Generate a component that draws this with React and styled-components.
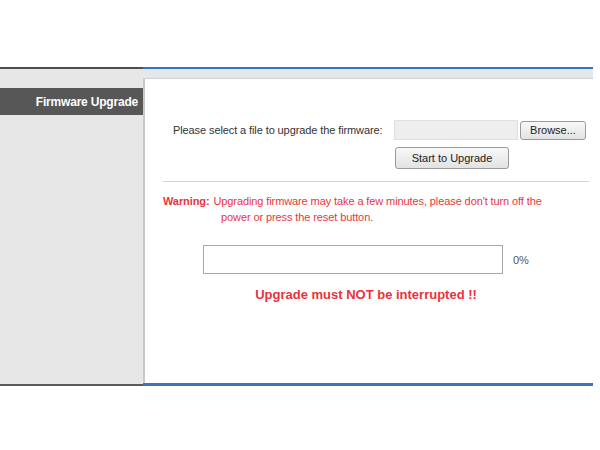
import React from "react";
import styled, { createGlobalStyle } from "styled-components";

const Global = createGlobalStyle`
  html, body { margin: 0; padding: 0; background: #fff; }
  body { font-family: "Liberation Sans", Arial, sans-serif; }
`;

const Page = styled.div`
  width: 600px;
  height: 450px;
  padding-top: 67px;
  box-sizing: border-box;
  background: #fff;
`;

const Shell = styled.div`
  display: grid;
  grid-template-columns: 143px 450px;
  height: 319px;
`;

const Sidebar = styled.aside`
  background: #e7e7e7;
  border-top: 2px solid #4f4f4f;
  border-bottom: 2px solid #5a5a5a;
  padding-top: 19px;
`;

const NavHeader = styled.div`
  height: 27px;
  background: #575757;
  color: #fff;
  font-weight: bold;
  font-size: 12px;
  display: flex;
  align-items: center;
  justify-content: flex-end;
  padding-right: 6px;
  margin-right: -1px;
  letter-spacing: -0.2px;
`;

const Main = styled.main`
  display: flex;
  flex-direction: column;
  border-top: 2px solid #3b73bb;
  border-bottom: 3px solid #3e74b8;
`;

const TopBand = styled.div`
  height: 9px;
  background: linear-gradient(#e2e8ef, #e6e6e6);
  border-bottom: 1px solid #d2d2d2;
`;

const Panel = styled.section`
  flex: 1;
  background: #fff;
  border-left: 2px solid #c9c9c9;
  padding: 41px 0 0 18px;
  font-size: 11px;
  color: #333;
`;

const FileRow = styled.div`
  display: flex;
  align-items: center;
  padding-left: 10px;
`;

const Label = styled.span`
  width: 221px;
  letter-spacing: -0.1px;
`;

const FileBox = styled.div`
  width: 122px;
  height: 18px;
  background: #eeeeee;
  border: 1px solid #e0e0e0;
`;

const Button = styled.button`
  font-family: "Liberation Sans", Arial, sans-serif;
  font-size: 11px;
  color: #222;
  height: ${(p) => p.$h}px;
  width: ${(p) => p.$w}px;
  margin-left: ${(p) => p.$ml || 0}px;
  background: linear-gradient(#f8f8f8, #e2e2e2);
  border: 1px solid #9a9a9a;
  border-radius: 3px;
  padding: 0;
`;

const ButtonRow = styled.div`
  display: flex;
  padding-left: 232px;
  margin-top: 7px;
`;

const Divider = styled.hr`
  border: none;
  border-top: 1px solid #cfcfe4;
  margin: 12px 4px 0 0;
`;

const Warning = styled.div`
  color: #e8353d;
  margin-top: 11px;
  line-height: 16px;
  letter-spacing: -0.1px;
`;

const WarnLabel = styled.span`
  font-weight: bold;
  margin-right: 4px;
`;

const WarnCont = styled.span`
  display: block;
  padding-left: 58px;
`;

const ProgressRow = styled.div`
  display: flex;
  align-items: center;
  margin: 20px 0 0 40px;
`;

const ProgressBox = styled.div`
  width: 298px;
  height: 27px;
  border: 1px solid #a8a8a8;
  background: #fff;
`;

const Percent = styled.span`
  margin-left: 10px;
  color: #555555;
`;

const Alert = styled.div`
  width: 406px;
  text-align: center;
  color: #e8323c;
  font-weight: bold;
  font-size: 13px;
  margin-top: 13px;
`;

export default function App() {
  return (
    <Page>
      <Global />
      <Shell>
        <Sidebar>
          <NavHeader>Firmware Upgrade</NavHeader>
        </Sidebar>
        <Main>
          <TopBand />
          <Panel>
            <FileRow>
              <Label>Please select a file to upgrade the firmware:</Label>
              <FileBox />
              <Button $w={66} $h={19} $ml={2}>Browse...</Button>
            </FileRow>
            <ButtonRow>
              <Button $w={114} $h={22}>Start to Upgrade</Button>
            </ButtonRow>
            <Divider />
            <Warning>
              <WarnLabel>Warning:</WarnLabel>
              Upgrading firmware may take a few minutes, please don't turn off the
              <WarnCont>power or press the reset button.</WarnCont>
            </Warning>
            <ProgressRow>
              <ProgressBox />
              <Percent>0%</Percent>
            </ProgressRow>
            <Alert>Upgrade must NOT be interrupted !!</Alert>
          </Panel>
        </Main>
      </Shell>
    </Page>
  );
}
